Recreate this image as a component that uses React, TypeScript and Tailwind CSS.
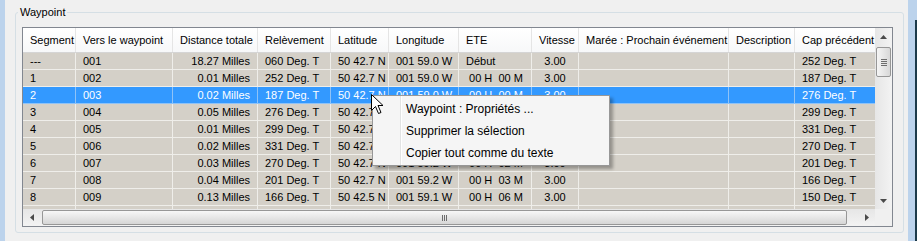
import React from 'react';

type Align = 'left' | 'right' | 'center';

interface Col {
  label: string;
  align: Align;
}

const cols: Col[] = [
  { label: 'Segment', align: 'left' },
  { label: 'Vers le waypoint', align: 'left' },
  { label: 'Distance totale', align: 'right' },
  { label: 'Relèvement', align: 'left' },
  { label: 'Latitude', align: 'left' },
  { label: 'Longitude', align: 'left' },
  { label: 'ETE', align: 'left' },
  { label: 'Vitesse', align: 'center' },
  { label: 'Marée : Prochain événement', align: 'left' },
  { label: 'Description', align: 'left' },
  { label: 'Cap précédent', align: 'left' },
];

// rows 3-5: longitude / ETE / vitesse sit fully under the context menu
const rows: string[][] = [
  ['---', '001', '18.27 Milles', '060 Deg. T', '50 42.7 N', '001 59.0 W', 'Début', '3.00', '', '', '252 Deg. T'],
  ['1', '002', '0.01 Milles', '252 Deg. T', '50 42.7 N', '001 59.0 W', ' 00 H  00 M', '3.00', '', '', '187 Deg. T'],
  ['2', '003', '0.02 Milles', '187 Deg. T', '50 42.7 N', '001 59.0 W', ' 00 H  00 M', '3.00', '', '', '276 Deg. T'],
  ['3', '004', '0.05 Milles', '276 Deg. T', '50 42.7 N', '', '', '', '', '', '299 Deg. T'],
  ['4', '005', '0.01 Milles', '299 Deg. T', '50 42.7 N', '', '', '', '', '', '331 Deg. T'],
  ['5', '006', '0.02 Milles', '331 Deg. T', '50 42.7 N', '', '', '', '', '', '270 Deg. T'],
  ['6', '007', '0.03 Milles', '270 Deg. T', '50 42.7 N', '001 59.2 W', ' 00 H  02 M', '3.00', '', '', '201 Deg. T'],
  ['7', '008', '0.04 Milles', '201 Deg. T', '50 42.7 N', '001 59.2 W', ' 00 H  03 M', '3.00', '', '', '166 Deg. T'],
  ['8', '009', '0.13 Milles', '166 Deg. T', '50 42.5 N', '001 59.1 W', ' 00 H  06 M', '3.00', '', '', '150 Deg. T'],
  ['', '', '', '', '', '', '', '', '', '', ''],
];

const gridCols =
  'grid grid-cols-[53px_97px_85px_73px_58px_70px_73px_47px_150px_66px_96px]';

const alignClass = (a: Align) =>
  a === 'right' ? 'text-right' : a === 'center' ? 'text-center' : 'text-left';

const Arrow: React.FC<{ dir: 'up' | 'down' | 'left' | 'right' }> = ({ dir }) => {
  const pts = {
    up: '0,4 3.5,0 7,4',
    down: '0,0 3.5,4 7,0',
    left: '4,0 0,3.5 4,7',
    right: '0,0 4,3.5 0,7',
  }[dir];
  const vertical = dir === 'up' || dir === 'down';
  return (
    <svg width={vertical ? 7 : 4} height={vertical ? 4 : 7} viewBox={vertical ? '0 0 7 4' : '0 0 4 7'}>
      <polygon points={pts} fill="#4a4a4a" />
    </svg>
  );
};

const ListView: React.FC = () => (
  <div className="w-[871px] border border-[#828790] bg-[#f0f0f0] flex flex-col">
    <div className="flex h-[181px]">
      {/* columns */}
      <div className="w-[852px] overflow-hidden bg-[#d4d0c8]">
        <div className={`${gridCols} h-[25px] bg-linear-to-b from-white to-[#f7f8f9] border-b border-[#d5d5d5]`}>
          {cols.map((c) => (
            <div
              key={c.label}
              className={`px-[7px] leading-[24px] whitespace-nowrap overflow-hidden border-r border-[#e5e5e5] ${alignClass(c.align)}`}
            >
              {c.label}
            </div>
          ))}
        </div>
        {rows.map((r, i) => {
          const sel = i === 2;
          return (
            <div key={i} className={`${gridCols} ${sel ? 'bg-[#3399ff] text-white' : ''}`}>
              {r.map((v, j) => (
                <div
                  key={j}
                  className={`h-[17px] leading-[16px] px-[7px] whitespace-pre overflow-hidden border-r border-b ${sel ? 'border-[#8fc3f7]' : 'border-[#efeeea]'} ${alignClass(cols[j].align)}`}
                >
                  {v}
                </div>
              ))}
            </div>
          );
        })}
      </div>
      {/* vertical scrollbar */}
      <div className="w-[17px] flex flex-col bg-linear-to-r from-[#e6e6e6] to-[#f3f3f3]">
        <div className="h-[17px] flex items-center justify-center">
          <Arrow dir="up" />
        </div>
        <div className="mx-[1px] mt-[2px] h-[30px] rounded-[2px] border border-[#979797] bg-linear-to-r from-[#f5f5f5] to-[#d8d8d8] flex flex-col items-center justify-center gap-[1px]">
          <div className="w-[6px] h-[1px] bg-[#6d6d6d]" />
          <div className="w-[6px] h-[1px] bg-[#6d6d6d]" />
          <div className="w-[6px] h-[1px] bg-[#6d6d6d]" />
          <div className="w-[6px] h-[1px] bg-[#6d6d6d]" />
        </div>
        <div className="flex-1" />
        <div className="h-[17px] flex items-center justify-center">
          <Arrow dir="down" />
        </div>
      </div>
    </div>
    {/* horizontal scrollbar */}
    <div className="flex h-[17px]">
      <div className="w-[852px] flex items-stretch bg-linear-to-b from-[#e6e6e6] to-[#f3f3f3]">
        <div className="w-[17px] flex items-center justify-center">
          <Arrow dir="left" />
        </div>
        <div className="ml-[2px] my-[1px] w-[805px] rounded-[2px] border border-[#979797] bg-linear-to-b from-[#f7f7f7] to-[#d6d6d6] flex items-center justify-center gap-[1px]">
          <div className="w-[1px] h-[6px] bg-[#6d6d6d]" />
          <div className="w-[1px] h-[6px] bg-[#6d6d6d]" />
          <div className="w-[1px] h-[6px] bg-[#6d6d6d]" />
        </div>
        <div className="flex-1" />
        <div className="w-[17px] flex items-center justify-center">
          <Arrow dir="right" />
        </div>
      </div>
      <div className="w-[17px] bg-[#f0f0f0]" />
    </div>
  </div>
);

const ContextMenu: React.FC = () => (
  <div className="absolute left-[372px] top-[95px] w-[238px] border border-[#979797] bg-[#f5f5f5] pt-[2px] pb-[1px] text-[12px] shadow-[3px_3px_3px_rgba(0,0,0,0.3)]">
    <div className="absolute left-[27px] top-0 bottom-0 w-[2px] border-l border-[#e2e3e3] bg-white" />
    {['Waypoint : Propriétés ...', 'Supprimer la sélection', 'Copier tout comme du texte'].map((t) => (
      <div key={t} className="relative h-[22px] leading-[22px] pl-[33px] whitespace-nowrap">
        {t}
      </div>
    ))}
  </div>
);

const Cursor: React.FC = () => (
  <svg className="absolute left-[371px] top-[94px]" width="13" height="21" viewBox="0 0 13 21">
    <path
      d="M0.5 0.5 L0.5 16.5 L4.5 12.5 L7.5 19.5 L10 18.5 L7 11.5 L12 11.5 Z"
      fill="white"
      stroke="black"
      strokeWidth="1"
      strokeLinejoin="miter"
    />
  </svg>
);

export default function App() {
  return (
    <div className="relative w-[917px] h-[241px] overflow-hidden bg-[#f0f0f0] flex font-['Liberation_Sans',Arial,sans-serif] text-[11px] text-black">
      <div className="w-[5px] bg-[#bcd3ec]" />
      <div className="pl-[10px] pt-[5px] pr-[4px]">
        <fieldset className="w-[889px] border border-[#d5dfe5] rounded-[3px] pl-[6px] pr-[10px] pt-[8px] pb-[5px]">
          <legend className="-ml-[4px] px-[2px] leading-[14px]">Waypoint</legend>
          <ListView />
        </fieldset>
      </div>
      <div className="w-[9px] flex">
        <div className="w-[7px] bg-[#bcd3ec]" />
        <div className="w-[2px] flex flex-col">
          <div className="h-[20px] bg-[#bcd3ec]" />
          <div className="flex-1 bg-[#1c3a4a]" />
        </div>
      </div>
      <ContextMenu />
      <Cursor />
    </div>
  );
}
